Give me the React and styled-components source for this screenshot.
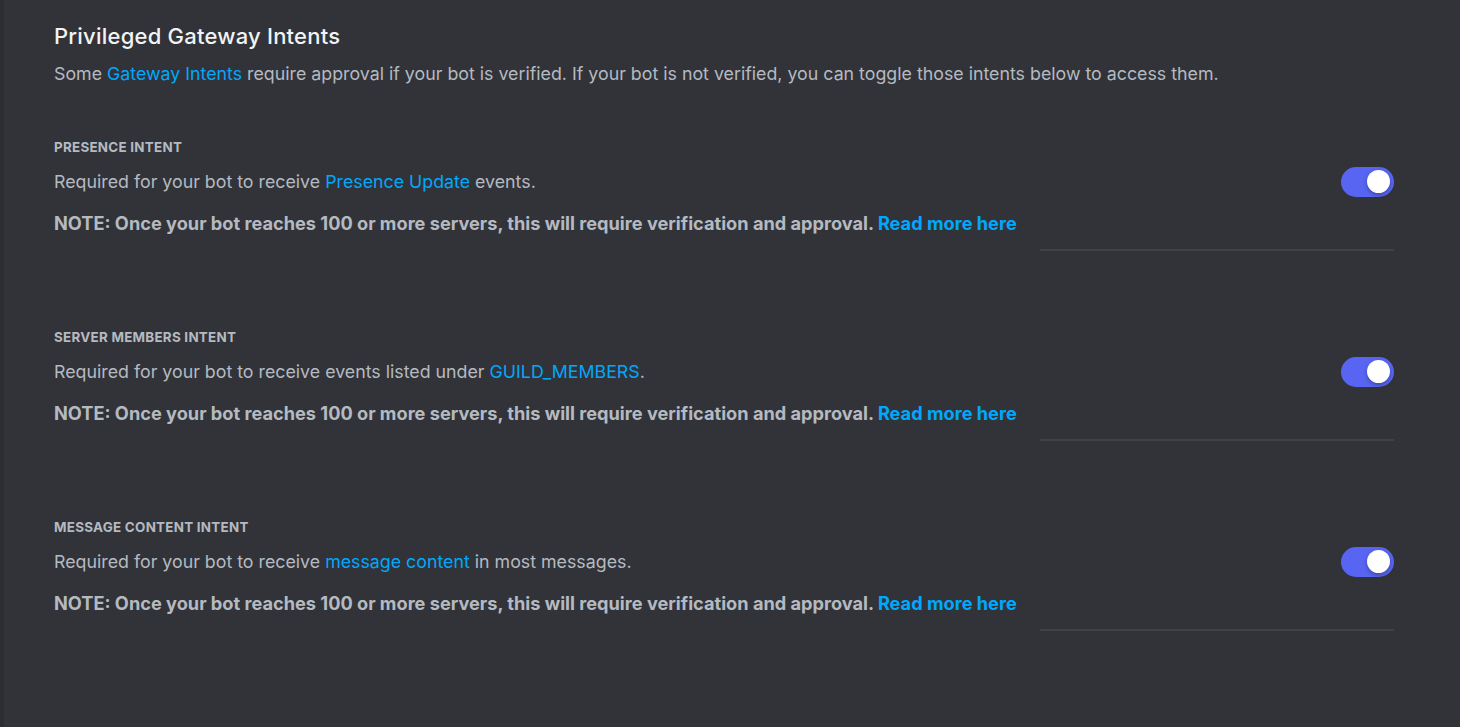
import React from "react";
import styled, { createGlobalStyle } from "styled-components";

const Global = createGlobalStyle`
  html, body { margin: 0; padding: 0; background: #313338; }
  body { font-family: Inter, "Noto Sans", sans-serif; -webkit-font-smoothing: antialiased; }
  * { box-sizing: border-box; }
`;

const Page = styled.div`
  display: flex;
  min-height: 727px;
  background: #313338;
`;

const Rail = styled.div`
  width: 4px;
  flex: none;
  background: #2b2d31;
`;

const Content = styled.main`
  flex: 1;
  padding: 22px 66px 0 50px;
`;

const Title = styled.h2`
  margin: 0;
  font-size: 22px;
  line-height: 28px;
  font-weight: 500;
  color: #f2f3f5;
  letter-spacing: 0.01em;
`;

const Lead = styled.p`
  margin: 12px 0 0;
  font-size: 17.8px;
  line-height: 24px;
  color: #b5bac1;
`;

const Link = styled.a`
  color: #00a8fc;
  text-decoration: none;
  font-weight: ${(p) => (p.$bold ? 700 : "inherit")};
`;

const Section = styled.section`
  margin-top: ${(p) => (p.$first ? "53px" : "78px")};
  display: flex;
  flex-direction: column;
`;

const Label = styled.h3`
  margin: 0;
  font-size: 13.4px;
  line-height: 16px;
  font-weight: 700;
  text-transform: uppercase;
  color: #b5bac1;
  letter-spacing: 0.02em;
`;

const Row = styled.div`
  display: flex;
  align-items: center;
  justify-content: space-between;
  margin-top: 12px;
`;

const Desc = styled.p`
  margin: 0;
  font-size: 17.8px;
  line-height: 24px;
  color: #b5bac1;
`;

const Note = styled.p`
  margin: 16px 0 0;
  font-size: 18.2px;
  line-height: 20px;
  font-weight: 700;
  color: #b5bac1;
`;

const Switch = styled.div`
  position: relative;
  width: 53px;
  height: 30px;
  border-radius: 15px;
  background: #5865f2;
  flex: none;
`;

const Knob = styled.span`
  position: absolute;
  top: 3px;
  right: 4px;
  width: 23px;
  height: 23px;
  border-radius: 50%;
  background: #ffffff;
  box-shadow: 0 2px 4px rgba(0, 0, 0, 0.3);
`;

const Divider = styled.hr`
  align-self: flex-end;
  width: 354px;
  height: 2px;
  margin: 16px 0 0;
  border: 0;
  background: #3f4147;
`;

const intents = [
  {
    label: "Presence Intent",
    desc: (
      <>
        Required for your bot to receive <Link href="#">Presence Update</Link> events.
      </>
    ),
  },
  {
    label: "Server Members Intent",
    desc: (
      <>
        Required for your bot to receive events listed under <Link href="#">GUILD_MEMBERS</Link>.
      </>
    ),
  },
  {
    label: "Message Content Intent",
    desc: (
      <>
        Required for your bot to receive <Link href="#">message content</Link> in most messages.
      </>
    ),
  },
];

export default function App() {
  return (
    <>
      <Global />
      <Page>
        <Rail />
        <Content>
          <Title>Privileged Gateway Intents</Title>
          <Lead>
            Some <Link href="#">Gateway Intents</Link> require approval if your bot is verified. If your bot is not
            verified, you can toggle those intents below to access them.
          </Lead>
          {intents.map((it, i) => (
            <Section key={it.label} $first={i === 0}>
              <Label>{it.label}</Label>
              <Row>
                <Desc>{it.desc}</Desc>
                <Switch>
                  <Knob />
                </Switch>
              </Row>
              <Note>
                NOTE: Once your bot reaches 100 or more servers, this will require verification and approval.{" "}
                <Link href="#" $bold>
                  Read more here
                </Link>
              </Note>
              <Divider />
            </Section>
          ))}
        </Content>
      </Page>
    </>
  );
}
